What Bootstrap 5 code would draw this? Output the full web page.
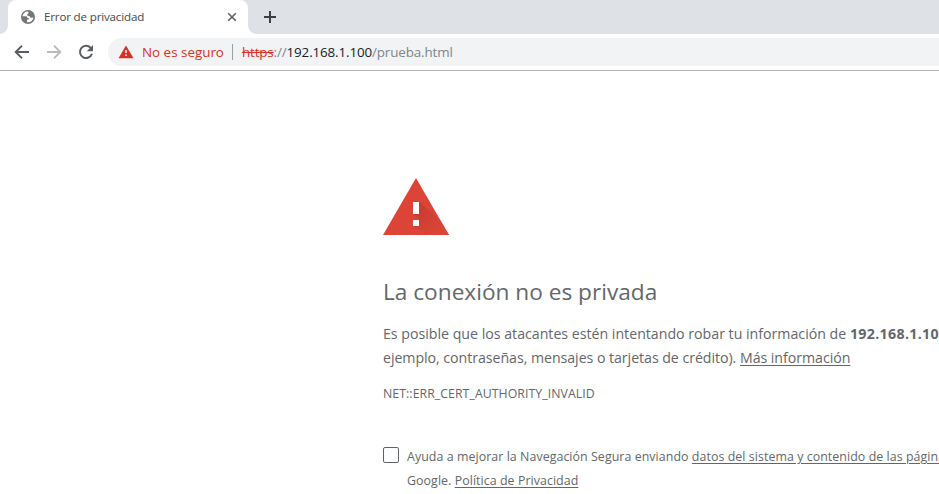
<!DOCTYPE html>
<html lang="es">
<head>
<meta charset="utf-8">
<meta name="viewport" content="width=device-width, initial-scale=1">
<title>Error de privacidad</title>
<link href="https://cdn.jsdelivr.net/npm/bootstrap@5.3.0/dist/css/bootstrap.min.css" rel="stylesheet">
<style>
body{font-family:"Segoe UI","Open Sans","Noto Sans",sans-serif;color:#63676b;background:#fff;height:494px;overflow:hidden;white-space:nowrap}
svg{display:block;flex:none}
.tabstrip{height:34px;background:#dee1e6;padding-left:8px}
.browser-tab{width:240px;height:34px;background:#fff;border-radius:8px 8px 0 0;padding:0 11px 0 13px;position:relative}
.browser-tab::before,.browser-tab::after{content:"";position:absolute;bottom:0;width:8px;height:8px}
.browser-tab::before{left:-8px;background:radial-gradient(circle at 0 0,transparent 7.5px,#fff 8px)}
.browser-tab::after{right:-8px;background:radial-gradient(circle at 100% 0,transparent 7.5px,#fff 8px)}
.tab-title{font-size:11.6px;color:#45494d;margin-left:9px;letter-spacing:-.17px}
.new-tab{margin-left:15px}
.toolbar{height:37px;border-bottom:1px solid #b1b3b6;padding-left:14px}
.address{height:28px;background:#f1f3f4;border-radius:14px 0 0 14px;margin-left:14px;padding-left:10px;font-size:13.4px}
.address span{padding-top:1px}
.unsafe{color:#d93025;margin-left:8px}
.divider{width:1px;height:16px;background:#9aa0a6;margin:0 9px 0 8px}
.url{color:#80868b;letter-spacing:-.13px}
.url s{color:#d93025}
.url b{font-weight:400;color:#202124}
.interstitial{margin-left:383px;padding-top:106px}
h1{font-size:22.65px;line-height:29px;margin:42px 0 0}
.message{font-size:14.2px;line-height:24px;margin:16px 0 0;letter-spacing:-.01px}
.message strong{letter-spacing:.32px}
.message .second{letter-spacing:-.05px}
.code{font-size:12.3px;line-height:20px;margin:14px 0 0;letter-spacing:.06px}
.optin{font-size:12.4px;line-height:24px;margin-top:41px;letter-spacing:.06px}
.checkbox{width:16px;height:16px;border:1px solid #5f6368;border-radius:2px;margin:2px 8px 0 0;flex:none}
a{color:inherit;text-decoration:underline;text-underline-offset:2px;text-decoration-thickness:1px}
</style>
</head>
<body>
<header>
<div class="tabstrip d-flex align-items-center">
<div class="browser-tab d-flex align-items-center">
<svg width="14" height="14" viewBox="0 0 14 14"><circle cx="7" cy="7" r="7" fill="#757679"/><path fill="#fff" d="M6.8 1.5C4 1.4 1.8 3.5 1.5 6.3h3.1c1.2 0 1.6.7 1.6 1.6h1.5v1.5H6.1v2.9c3.4.5 5.9-1.8 6.3-4.8-.8-.2-1 .5-2 .3-1.100-.2-1.300-.7-1.700-1.600C8 6 7 6.200 6.500 5.600 6 5 6.200 3.800 7.200 3.500 8 3.300 7.500 1.900 6.800 1.500z"/></svg>
<span class="tab-title">Error de privacidad</span>
<svg class="ms-auto" width="10" height="10" viewBox="0 0 10 10"><path d="M1.200 1.200l7.600 7.600M8.800 1.200L1.200 8.800" stroke="#5f6368" stroke-width="1.600"/></svg>
</div>
<svg class="new-tab" width="14" height="14" viewBox="0 0 14 14"><path d="M7 1v12M1 7h12" stroke="#3c4043" stroke-width="2"/></svg>
</div>
<div class="toolbar d-flex align-items-center">
<svg width="16" height="16" viewBox="0 0 16 16"><path d="M15 8H2.500M8 1.700L1.700 8 8 14.300" fill="none" stroke="#5a5d61" stroke-width="1.900"/></svg>
<svg class="ms-3" width="16" height="16" viewBox="0 0 16 16"><path d="M1 8h12.500M8 1.700L14.300 8 8 14.300" fill="none" stroke="#bababa" stroke-width="1.900"/></svg>
<svg class="ms-3" width="16" height="16" viewBox="0 0 16 16"><path d="M12.700 3.900A6.100 6.100 0 1 0 13.900 9.700" fill="none" stroke="#5a5d61" stroke-width="2"/><path d="M15 1v6.200H8.800z" fill="#5a5d61"/></svg>
<div class="address d-flex align-items-center flex-grow-1">
<svg width="16" height="14" viewBox="0 0 16 14"><path d="M8 .4L15.500 13.200H.5z" fill="#d93025"/><path d="M7.200 5.300h1.600v2.700H7.200zM7.200 9.500h1.600v1.500H7.200z" fill="#fff"/></svg>
<span class="unsafe">No es seguro</span><span class="divider"></span>
<span class="url"><s>https</s>://<b>192.168.1.100</b>/prueba.html</span>
</div>
</div>
</header>
<main class="interstitial">
<svg width="66" height="58" viewBox="0 0 66 58"><defs><linearGradient id="shade" x1="30" y1="28" x2="53" y2="54" gradientUnits="userSpaceOnUse"><stop stop-color="#c33b30"/><stop offset="1" stop-color="#db4437"/></linearGradient></defs><path d="M33 1l33 57H0z" fill="#db4437"/><path d="M36 25L57 43l9 15H45L30 49l6-7-6-5z" fill="url(#shade)"/><path d="M30 25h6v12h-6zM30 43h6v6h-6z" fill="#fff"/></svg>
<h1 class="fw-normal">La conexión no es privada</h1>
<p class="message">Es posible que los atacantes estén intentando robar tu información de <strong>192.168.1.10</strong><br><span class="second">ejemplo, contraseñas, mensajes o tarjetas de crédito). <a href="#">Más información</a></span></p>
<p class="code">NET::ERR_CERT_AUTHORITY_INVALID</p>
<div class="optin d-flex align-items-start"><span class="checkbox"></span><div>Ayuda a mejorar la Navegación Segura enviando <a href="#">datos del sistema y contenido de las página</a><br>Google. <a href="#">Política de Privacidad</a></div></div>
</main>
<script src="https://cdn.jsdelivr.net/npm/bootstrap@5.3.0/dist/js/bootstrap.bundle.min.js"></script>
</body>
</html>
